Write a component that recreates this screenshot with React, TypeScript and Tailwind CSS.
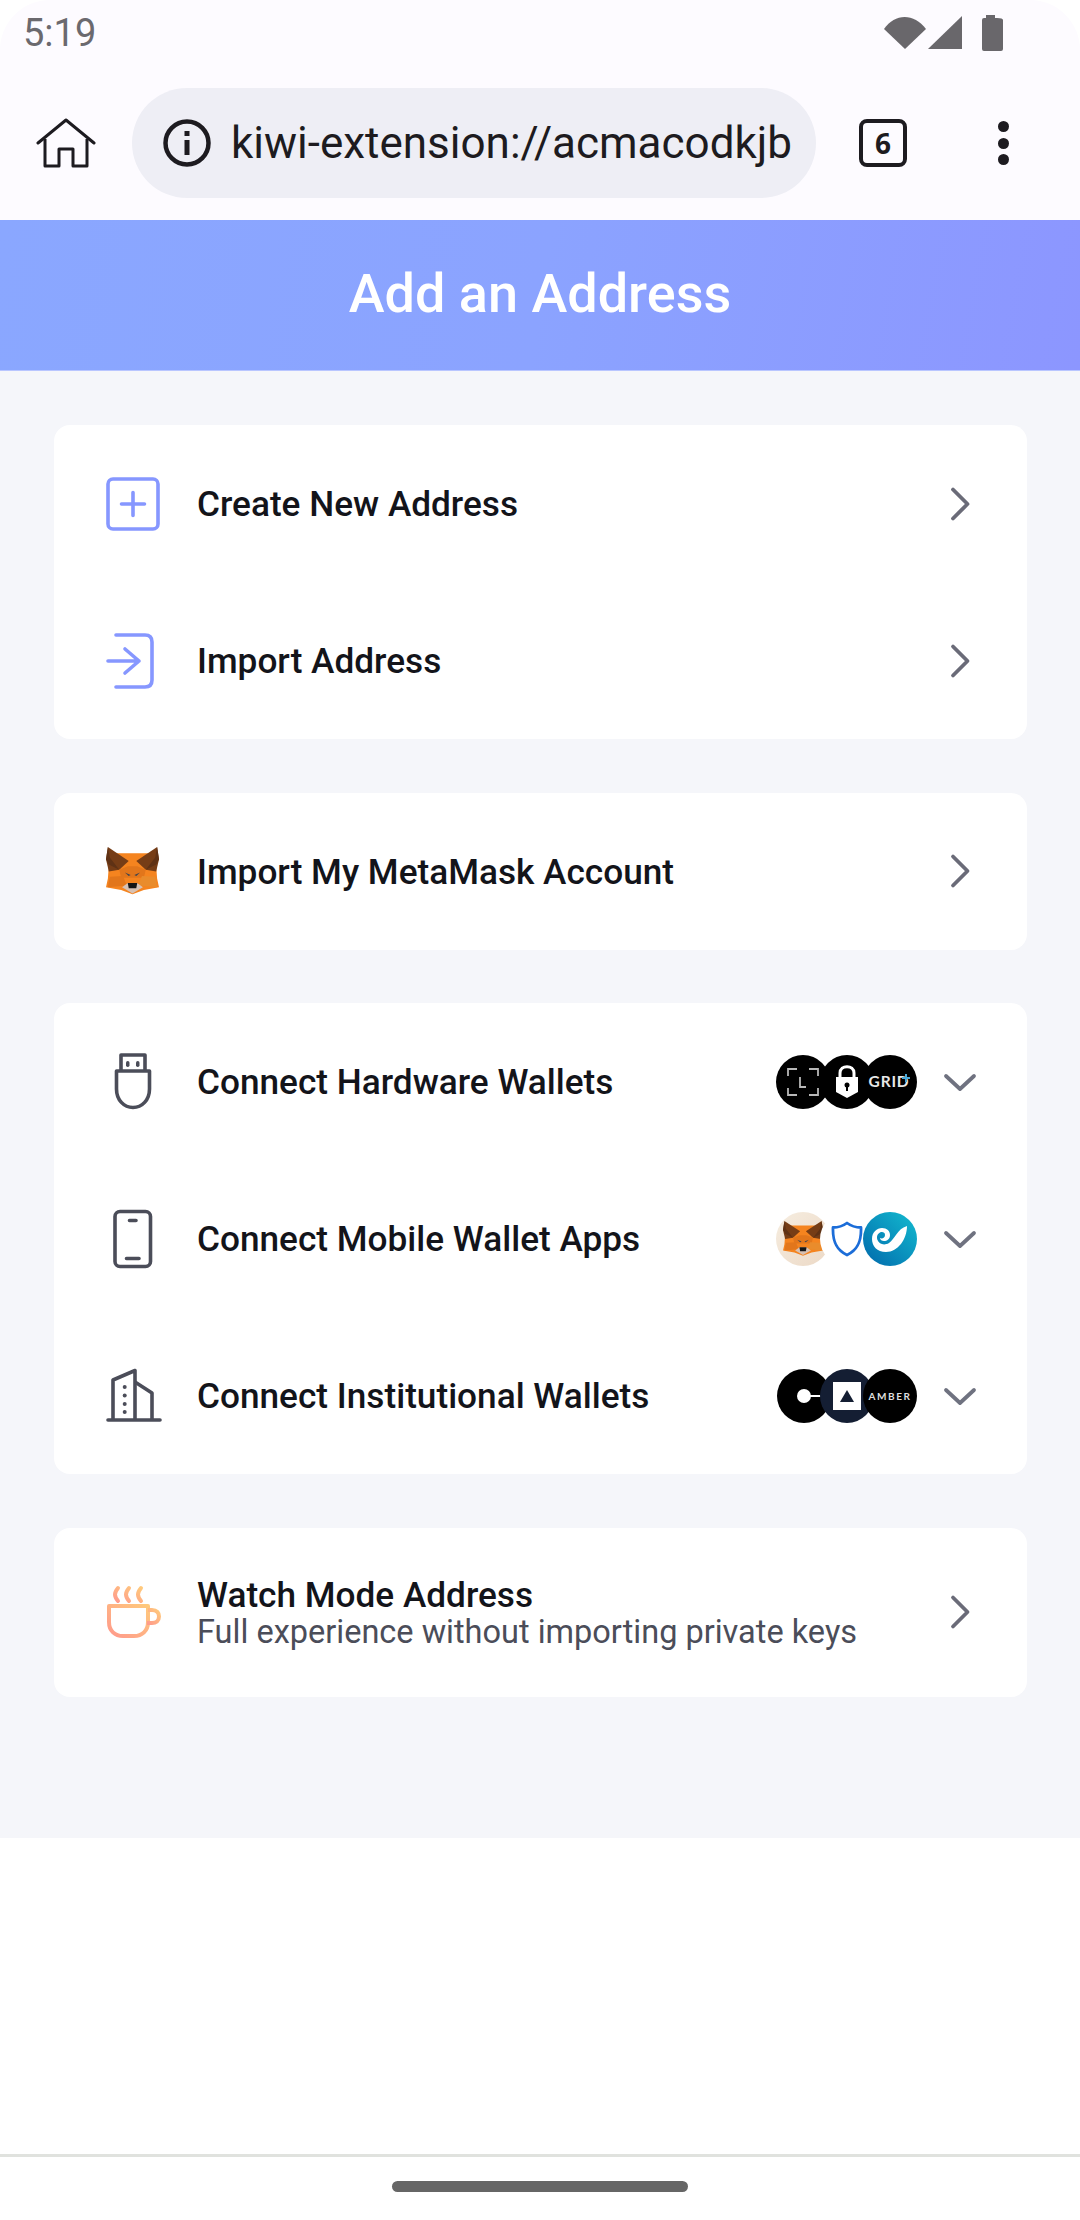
import React from "react";

const Chevron = () => (
  <svg width="40" height="40" viewBox="0 0 40 40" fill="none" className="shrink-0">
    <path d="M13 5.500 L27.500 20 L13 34.500" stroke="#6a6b78" strokeWidth="3.800" strokeLinecap="round" strokeLinejoin="round" />
  </svg>
);
const ChevronDown = () => (
  <svg width="40" height="40" viewBox="0 0 40 40" fill="none" className="shrink-0">
    <path d="M6 14 L20 27 L34 14" stroke="#6f7280" strokeWidth="3.800" strokeLinecap="round" strokeLinejoin="round" />
  </svg>
);

const Plus = () => (
  <svg width="56" height="56" viewBox="0 0 56 56" fill="none">
    <rect x="2" y="3" width="50" height="50" rx="5" stroke="#8697ff" strokeWidth="3.600" />
    <path d="M27 16.500 V39.500 M15.500 28 H38.500" stroke="#8697ff" strokeWidth="3.600" strokeLinecap="round" />
  </svg>
);
const ImportIcon = () => (
  <svg width="56" height="56" viewBox="0 0 56 56" fill="none">
    <path d="M10 2 H39 Q46 2 46 9 V47 Q46 54 39 54 H10" stroke="#8697ff" strokeWidth="3.600" strokeLinecap="round" />
    <path d="M2 28 H33 M19 16 L33 28 L19 40" stroke="#8697ff" strokeWidth="3.600" strokeLinecap="round" strokeLinejoin="round" />
  </svg>
);
const Fox = ({ w, h }: { w: number; h: number }) => (
  <svg width={w} height={h} viewBox="0 0 56 56" fill="none" preserveAspectRatio="none">
    <polygon points="4,7 52,7 54,36 56,46 40,49 28,54 16,49 0,46 2,36" fill="#f5841f" />
    <polygon points="2,0 24,16 14,26 3,28 0,14" fill="#763d16" />
    <polygon points="54,0 32,16 42,26 53,28 56,14" fill="#763d16" />
    <polygon points="2,0 0,14 3,20 14,26 4,12" fill="#5f3215" />
    <polygon points="54,0 56,14 53,20 42,26 52,12" fill="#5f3215" />
    <polygon points="14,26 23,22 33,22 42,26 40,35 16,35" fill="#e2761b" />
    <polygon points="4,34 18,33 22,44 2,46" fill="#e2761b" />
    <polygon points="52,34 38,33 34,44 54,46" fill="#e98c2c" />
    <polygon points="20,29 26,32 24,33" fill="#3a4353" />
    <polygon points="36,29 30,32 32,33" fill="#3a4353" />
    <polygon points="17,46 23,41 33,41 39,46 28,53" fill="#d7c1b3" />
    <polygon points="23,41 33,41 32,47 24,47" fill="#161616" />
  </svg>
);
const UsbIcon = () => (
  <svg width="56" height="60" viewBox="0 0 56 60" fill="none">
    <path d="M15 20 V3 H39 V20" stroke="#4b4d59" strokeWidth="3.600" strokeLinejoin="round" />
    <path d="M10.500 19 H43.500 V37 C43.500 48 36 55.500 27 55.500 C18 55.500 10.500 48 10.500 37 Z" stroke="#4b4d59" strokeWidth="3.600" strokeLinejoin="round" />
    <rect x="20" y="9" width="3.500" height="6" rx="1.700" fill="#4b4d59" />
    <rect x="30" y="9" width="3.500" height="6" rx="1.700" fill="#4b4d59" />
  </svg>
);
const PhoneIcon = () => (
  <svg width="56" height="60" viewBox="0 0 56 60" fill="none">
    <rect x="9" y="2.500" width="35.500" height="55" rx="5" stroke="#4b4d59" strokeWidth="3.600" />
    <path d="M23.500 11.500 H30 M20.500 49.500 H33" stroke="#4b4d59" strokeWidth="3.600" strokeLinecap="round" />
  </svg>
);
const BuildingIcon = () => (
  <svg width="56" height="56" viewBox="0 0 56 56" fill="none">
    <path d="M2 52 H54" stroke="#4b4d59" strokeWidth="3.600" strokeLinecap="round" />
    <path d="M7 52 V12 L29 2.500 V52" stroke="#4b4d59" strokeWidth="3.600" strokeLinejoin="round" />
    <path d="M29 14 L46 25 V52" stroke="#4b4d59" strokeWidth="3.600" strokeLinejoin="round" />
    <circle cx="18.700" cy="19" r="2" fill="#4b4d59" />
    <circle cx="18.700" cy="27.500" r="2" fill="#4b4d59" />
    <circle cx="18.700" cy="36" r="2" fill="#4b4d59" />
    <circle cx="18.700" cy="44" r="2" fill="#4b4d59" />
  </svg>
);
const CupIcon = () => (
  <svg width="56" height="56" viewBox="0 -2 56 56" fill="none">
    <defs>
      <linearGradient id="cup" x1="0" y1="1" x2="1" y2="0">
        <stop offset="0" stopColor="#ff9a8c" />
        <stop offset="1" stopColor="#ffc97c" />
      </linearGradient>
    </defs>
    <path d="M3 20 H42 V36 C42 45 36 50 28 50 H17 C9 50 3 45 3 36 Z" stroke="url(#cup)" strokeWidth="4" strokeLinejoin="round" />
    <path d="M42 24 H46 C51 24 53 27 53 30.500 C53 35 50 37 46 37 H41" stroke="url(#cup)" strokeWidth="4" />
    <path d="M12 2 C8 7 8 10 12 15 M23 2 C19 7 19 10 23 15 M35 2 C31 7 31 10 35 15" stroke="url(#cup)" strokeWidth="4" strokeLinecap="round" />
  </svg>
);

const Circle = ({ className = "", children }: { className?: string; children?: React.ReactNode }) => (
  <div className={`relative flex items-center justify-center w-[54px] h-[54px] rounded-full overflow-hidden shrink-0 ${className}`}>
    {children}
  </div>
);

const HardwareLogos = () => (
  <div className="flex">
    <Circle className="bg-black">
      <svg width="32" height="28" viewBox="0 0 32 28" fill="none">
        <path d="M1 8 V1 H10 M22 1 H31 V8 M1 20 V27 H10 M22 27 H31 V20" stroke="#b8b8b8" strokeWidth="1.800" />
        <path d="M13 9 V19 H19" stroke="#b8b8b8" strokeWidth="1.800" />
      </svg>
    </Circle>
    <Circle className="bg-black -ml-[10.500px]">
      <svg width="24" height="34" viewBox="0 0 24 34" fill="none">
        <path d="M5 13 V8 C5 -0.500 19 -0.500 19 8 V13" stroke="#fff" strokeWidth="3" />
        <path d="M1 12 H23 V27 L12 33 L1 27 Z" fill="#fff" />
        <circle cx="12" cy="20" r="2.500" fill="#000" />
        <rect x="11" y="20" width="2" height="6" fill="#000" />
      </svg>
    </Circle>
    <Circle className="bg-black -ml-[10.500px]">
      <span className="text-[15.500px] leading-none font-bold tracking-[0.8px] text-[#e8e8e8] font-['Lato','sans-serif'] pr-[2px]">GRID</span>
      <svg width="8" height="8" viewBox="0 0 8 8" className="absolute left-[39px] top-[19px]">
        <path d="M4 0 V8 M0 4 H8" stroke="#4aa8d8" strokeWidth="2" />
      </svg>
    </Circle>
  </div>
);

const MobileLogos = () => (
  <div className="flex">
    <Circle className="bg-[linear-gradient(135deg,#f6ede0,#ecd9c6)]">
      <Fox w={40} h={36} />
    </Circle>
    <Circle className="bg-white -ml-[10.500px]">
      <svg width="32" height="36" viewBox="0 0 32 36" fill="none">
        <path d="M16 2 C20 5 25 6.500 30 6.500 C30.500 20 27 29 16 34 C5 29 1.500 20 2 6.500 C7 6.500 12 5 16 2 Z" stroke="#1c6dd8" strokeWidth="2.800" strokeLinejoin="round" />
      </svg>
    </Circle>
    <Circle className="bg-[linear-gradient(45deg,#0168ab,#13bcd0)] -ml-[10.500px]">
      <svg width="36" height="28" viewBox="0 0 36 28" fill="none">
        <path d="M35 1 C35 14 26 27 14 27 C5 27 0 21 0 14 C0 7 5 3 10 3 C15 3 18 6 18 10 C18 14 15 16 12 16 C10 16 8 15 8 13 C10 14 13 13 13 10 C13 7 10 6.500 8 7.500 C5 9 4.500 12 5.500 15 C7 19 12 21 17 18 C23 14 25 4 35 1 Z" fill="#fff" />
      </svg>
    </Circle>
  </div>
);

const InstitutionalLogos = () => (
  <div className="flex pl-px">
    <Circle className="bg-black">
      <div className="w-[14px] h-[14px] rounded-full bg-white" />
      <div className="absolute left-[30px] top-[26px] w-[24px] h-[2px] bg-white" />
    </Circle>
    <Circle className="bg-[#141e33] -ml-[11px]">
      <div className="w-[28px] h-[28px] bg-white flex items-center justify-center">
        <div className="w-0 h-0 border-l-[7px] border-r-[7px] border-b-[12px] border-l-transparent border-r-transparent border-b-[#141e33]" />
      </div>
    </Circle>
    <Circle className="bg-black -ml-[11px]">
      <span className="text-[10px] leading-none font-bold tracking-[1.600px] text-[#dedede] font-['Lato','sans-serif']">AMBER</span>
    </Circle>
  </div>
);

const Row = ({
  icon,
  title,
  right,
  expand,
}: {
  icon: React.ReactNode;
  title: string;
  right?: React.ReactNode;
  expand?: boolean;
}) => (
  <div className="flex items-center h-[157px] pl-[52px] pr-[47px]">
    <div className="w-[56px] h-[60px] flex items-center justify-center shrink-0">{icon}</div>
    <div className="ml-[35px] flex-1 text-[35.200px] font-medium text-[#13141a] whitespace-nowrap pt-[2px]">{title}</div>
    {right}
    <div className={expand ? "ml-[23px]" : ""}>{expand ? <ChevronDown /> : <Chevron />}</div>
  </div>
);

export default function App() {
  return (
    <div className="relative w-[1080px] h-[2220px] bg-white overflow-hidden font-['Roboto','sans-serif']">
      <div className="bg-[#fdfbff] rounded-t-[50px] h-[220px] flex flex-col">
        <div className="h-[88px] relative shrink-0 flex items-start justify-between pl-[23px] pr-[76px] pt-[11px]">
          <span className="text-[38px] leading-[44px] text-[#6b696e]">5:19</span>
          <svg width="122" height="38" viewBox="0 0 122 38" className="mt-[4px]">
            <path d="M2 14 C13 -2 32 -2 44 14 L23 34 Z" fill="#69676b" />
            <polygon points="46,34 80,34 80,1" fill="#69676b" />
            <path d="M100 5 Q100 3 102 3 H104 V0 H113 V3 H115 Q121 3 121 5 V34 Q121 36 119 36 H102 Q100 36 100 34 Z" fill="#69676b" />
          </svg>
        </div>
        <div className="flex items-center h-[110px] pl-[36px] shrink-0">
          <svg width="60" height="52" viewBox="0 0 60 52" fill="none" className="shrink-0 mt-[2px]">
            <path d="M2 25 L30 2 L58 25" stroke="#1d1b20" strokeWidth="3" strokeLinecap="round" strokeLinejoin="round" />
            <path d="M9 21 V48 H23 V31 H37 V48 H51 V21" stroke="#1d1b20" strokeWidth="3" strokeLinejoin="round" />
          </svg>
          <div className="ml-[36px] w-[684px] h-[110px] bg-[#eeeef5] rounded-full flex items-center pl-[31px] overflow-hidden shrink-0">
            <svg width="48" height="48" viewBox="0 0 48 48" fill="none" className="shrink-0">
              <circle cx="24" cy="24" r="21.500" stroke="#1d1b20" strokeWidth="4.500" />
              <rect x="21.500" y="21" width="5" height="15" fill="#1d1b20" />
              <rect x="21.500" y="12" width="5" height="5" fill="#1d1b20" />
            </svg>
            <span className="ml-[20px] text-[44px] leading-[110px] text-[#1d1b20] whitespace-nowrap w-[560px] overflow-hidden">
              kiwi-extension://acmacodkjb
            </span>
          </div>
          <div className="ml-[43px] w-[48px] h-[48px] rounded-[8px] border-[4px] border-[#1d1b20] flex items-center justify-center text-[28px] font-bold text-[#1d1b20] shrink-0 font-['Open_Sans','sans-serif'] leading-none">
            6
          </div>
          <div className="ml-[91px] flex flex-col gap-[5.500px] shrink-0">
            <div className="w-[11px] h-[11px] rounded-full bg-[#1d1b20]" />
            <div className="w-[11px] h-[11px] rounded-full bg-[#1d1b20]" />
            <div className="w-[11px] h-[11px] rounded-full bg-[#1d1b20]" />
          </div>
        </div>
      </div>

      <div className="h-[151px] flex items-center justify-center bg-[linear-gradient(100deg,#8aa7ff_0%,#8ba3ff_50%,#8c96ff_100%)] border-b border-b-[#b9c6ff]">
        <h1 className="text-[54px] font-medium text-white pb-[3px]">Add an Address</h1>
      </div>

      <div className="h-[1467px] bg-[#f5f6fa] pl-[54px] pr-[53px] pt-[54px] flex flex-col gap-[53.500px] items-stretch">
        <div className="bg-white rounded-[16px]">
          <Row icon={<Plus />} title="Create New Address" />
          <Row icon={<ImportIcon />} title="Import Address" />
        </div>
        <div className="bg-white rounded-[16px]">
          <Row icon={<div className="-ml-[3px]"><Fox w={53} h={49} /></div>} title="Import My MetaMask Account" />
        </div>
        <div className="bg-white rounded-[16px]">
          <Row icon={<UsbIcon />} title="Connect Hardware Wallets" right={<HardwareLogos />} expand />
          <Row icon={<PhoneIcon />} title="Connect Mobile Wallet Apps" right={<MobileLogos />} expand />
          <Row icon={<BuildingIcon />} title="Connect Institutional Wallets" right={<InstitutionalLogos />} expand />
        </div>
        <div className="bg-white rounded-[16px] h-[169.500px] flex items-center pl-[52px] pr-[47px]">
          <div className="w-[56px] h-[60px] flex items-center justify-center shrink-0"><CupIcon /></div>
          <div className="ml-[35px] flex-1 flex flex-col pt-[1px]">
            <div className="text-[35.200px] leading-[38px] font-medium text-[#13141a]">Watch Mode Address</div>
            <div className="text-[32.500px] leading-[36px] text-[#4b4d59]">Full experience without importing private keys</div>
          </div>
          <Chevron />
        </div>
      </div>

      <div className="h-[316px] bg-white" />
      <div className="absolute left-0 right-0 top-[2154px] h-[3px] bg-[#e0e2de]" />
      <div className="absolute left-[392px] top-[2181px] w-[296px] h-[11px] rounded-full bg-[#666666]" />
    </div>
  );
}
